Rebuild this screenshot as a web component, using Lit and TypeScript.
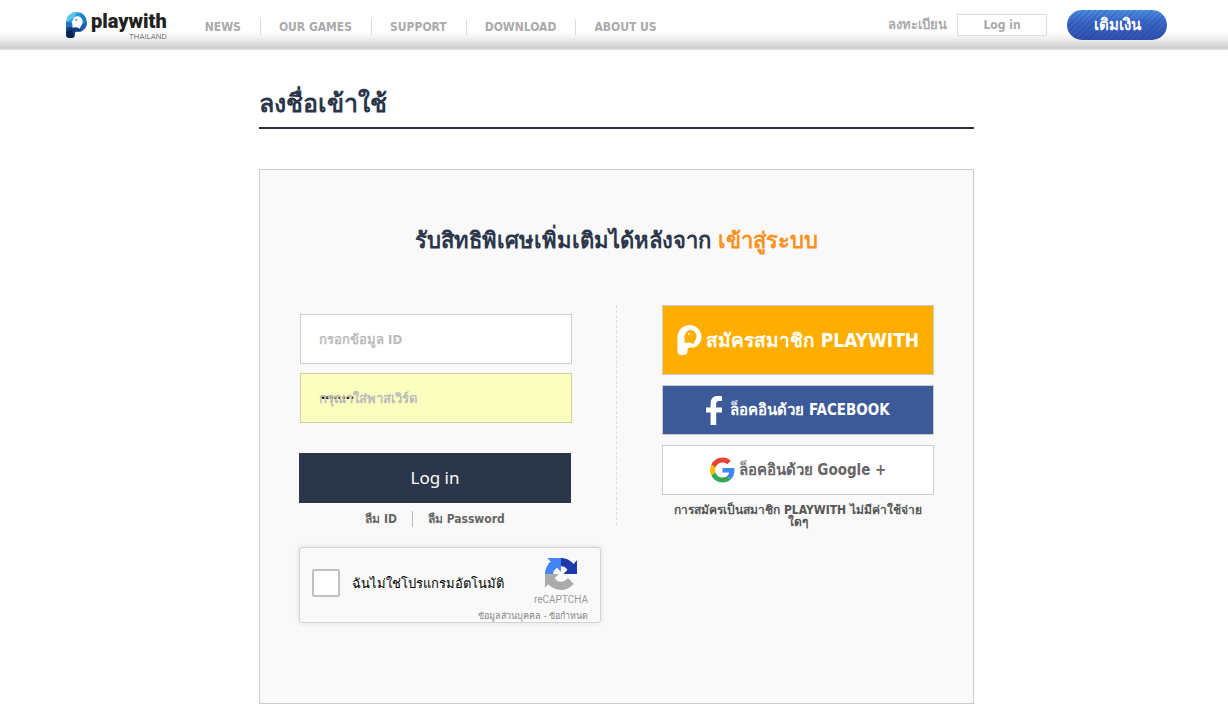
import { LitElement, html, css, svg } from "lit";
import { customElement } from "lit/decorators.js";

const bird = svg`<path
  d="M6.2 11.2c1-.6 1.4-1.2 1.8-2.4C8.8 6.4 10.6 5 13 5c3.6 0 6.2 3 6 6.6-.1 2.8-2.4 4.6-3.2 7.8-1.8-1.8-4.8-2.4-8.2-1.2-.8-2.4.6-4-1.4-7z"/>`;
const body = "M12 0a12 12 0 0 1 12 12c0 5-3 9-7.6 10.4H13c-1.6 0-3 .8-3 2V26a4 4 0 0 1-4 4H4a4 4 0 0 1-4-4V12A12 12 0 0 1 12 0z";

@customElement("site-header")
export class SiteHeader extends LitElement {
  static styles = css`
    :host {
      display: block;
      background: linear-gradient(#fff 64%, #f0f0f0 76%, #cdcdcd 96%, #e2e2e2);
    }
    .bar {
      display: flex;
      align-items: center;
      box-sizing: border-box;
      max-width: 1106px;
      min-height: 50px;
      margin: 0 auto;
      padding-left: 5px;
    }
    a { color: inherit; text-decoration: none; }
    .logo {
      display: flex;
      gap: 4px;
      color: #222;
    }
    .logo svg { width: 21px; height: 26px; margin-top: 2px; }
    .words { display: flex; flex-direction: column; align-items: flex-end; }
    .name { font: 900 20px/22px Roboto, sans-serif; }
    .country { font: 300 8px/9px Roboto, sans-serif; color: #444; }
    nav { display: flex; padding: 3px 0 0 20px; }
    nav a {
      padding: 0 19px 0 18px;
      line-height: 16px;
      color: #aaa;
      border-left: 1px solid #ddd;
    }
    nav a:first-child { border-left: 0; }
    .account {
      display: flex;
      align-items: center;
      margin-left: auto;
      color: #aaa;
    }
    .account a { font-size: 13px; }
    button { font: inherit; color: inherit; cursor: pointer; }
    .login {
      width: 90px;
      height: 22px;
      margin: 0 20px 0 10px;
      padding: 0;
      background: #fff;
      border: 1px solid #ddd;
    }
    .topup {
      width: 100px;
      height: 30px;
      padding: 0;
      border: 0;
      border-radius: 15px;
      color: #fff;
      font-size: 15px;
      background:
        repeating-linear-gradient(135deg, rgba(20, 40, 120, 0.22) 0 1px, transparent 1px 4px),
        linear-gradient(#4a8fdf, #3a66c8 40%, #2f50aa);
    }
  `;
  render() {
    return html`<div class="bar">
      <a class="logo" href="#" aria-label="playwith Thailand">
        <svg viewBox="0 0 24 30">
          <defs><clipPath id="p"><path d=${body} /></clipPath></defs>
          <g clip-path="url(#p)">
            <path fill="#2a9bd8" d="M0 0h24v30H0z" />
            <path fill="#5cc4ee" d="M0 0h13L9 6 0 13z" />
            <path fill="#1b7fc4" d="M16 0h8v13l-6-2z" />
            <path fill="#1c5fa8" d="M24 11v12H12l5-8z" />
            <path fill="#1d74b8" d="M0 11l8 1 1 7-9 3z" />
            <path fill="#123a7c" d="M0 18l9-1 8 2v4l-7 7H0z" />
            <path fill="#0a2352" d="M0 23l6-3 5 10H0z" />
          </g>
          <g fill="#fff">${bird}</g>
          <circle cx="11.5" cy="9" r="1" fill="#1b5fa0" />
        </svg>
        <span class="words"><span class="name">playwith</span><span class="country">THAILAND</span></span>
      </a>
      <nav>
        ${["NEWS", "OUR GAMES", "SUPPORT", "DOWNLOAD", "ABOUT US"].map((t) => html`<a href="#">${t}</a>`)}
      </nav>
      <div class="account">
        <a href="#">ลงทะเบียน</a>
        <button class="login">Log in</button>
        <button class="topup">เติมเงิน</button>
      </div>
    </div>`;
  }
}

@customElement("re-captcha")
export class ReCaptcha extends LitElement {
  static styles = css`
    :host {
      display: flex;
      justify-content: space-between;
      box-sizing: border-box;
      height: 76px;
      padding: 0 12px;
      border: 1px solid #d3d3d3;
      border-radius: 3px;
      box-shadow: 0 0 4px 1px rgba(0, 0, 0, 0.08);
      font-family: "Noto Sans", sans-serif;
      font-weight: 400;
      position: relative;
    }
    label {
      display: flex;
      align-items: center;
      gap: 12px;
      height: 70px;
      font-size: 13px;
      color: #000;
      white-space: nowrap;
    }
    input {
      appearance: none;
      box-sizing: border-box;
      width: 28px;
      height: 28px;
      margin: 0;
      background: #fff;
      border: 2px solid #c1c1c1;
      border-radius: 2px;
    }
    .brand {
      display: flex;
      flex-direction: column;
      align-items: center;
      padding-top: 10px;
      font: 10px/14px Roboto, sans-serif;
      color: #9b9b9b;
    }
    svg { width: 32px; height: 32px; margin-bottom: 3px; }
    .terms {
      position: absolute;
      right: 12px;
      bottom: 0;
      font-size: 9px;
      line-height: 13px;
      color: #888;
      white-space: nowrap;
    }
    a { color: inherit; text-decoration: none; }
  `;
  render() {
    return html`
      <label><input type="checkbox" />ฉันไม่ใช่โปรแกรมอัตโนมัติ</label>
      <div class="brand">
        <svg viewBox="0 0 64 64">
          <path fill="#1c3aa9" d="M64 31.955l-.033-1.37V4.687l-7.16 7.16C50.948 4.674 42.033.093 32.05.093c-10.4 0-19.622 4.96-25.458 12.64l11.736 11.86a15.55 15.55 0 0 1 4.754-5.334c2.05-1.6 4.952-2.906 8.968-2.906.485 0 .86.057 1.135.163 4.976.393 9.288 3.14 11.828 7.124l-8.307 8.307L64 31.953" />
          <path fill="#4285f4" d="M31.862.094l-1.37.033H4.594l7.16 7.16C4.58 13.147 0 22.06 0 32.046c0 10.4 4.96 19.622 12.64 25.458L24.5 45.768a15.55 15.55 0 0 1-5.334-4.754c-1.6-2.05-2.906-4.952-2.906-8.968 0-.485.057-.86.163-1.135.393-4.976 3.14-9.288 7.124-11.828l8.307 8.307L31.86.095" />
          <path fill="#ababab" d="M.001 32.045l.033 1.37v25.898l7.16-7.16c5.86 7.173 14.774 11.754 24.76 11.754 10.4 0 19.622-4.96 25.458-12.64l-11.736-11.86a15.55 15.55 0 0 1-4.754 5.334c-2.05 1.6-4.952 2.906-8.968 2.906-.485 0-.86-.057-1.135-.163-4.976-.393-9.288-3.14-11.828-7.124l8.307-8.307c-10.522.04-22.4.066-27.295-.005" />
        </svg>
        reCAPTCHA
      </div>
      <div class="terms"><a href="#">ข้อมูลส่วนบุคคล</a> - <a href="#">ข้อกำหนด</a></div>
    `;
  }
}

@customElement("app-root")
export class AppRoot extends LitElement {
  static styles = css`
    :host {
      display: block;
      min-height: 100vh;
      background: #fff;
      color: #2b364a;
      font: bold 12px/16px "DejaVu Sans Condensed", "Noto Sans", sans-serif;
    }
    main {
      box-sizing: border-box;
      max-width: 720px;
      margin: 0 auto;
      padding: 34px 0 19px 5px;
    }
    h1 {
      margin: 0 0 40px;
      padding-bottom: 4px;
      border-bottom: 2px solid #2d303c;
      font-size: 25px;
      line-height: 39px;
    }
    .card {
      padding: 55px 39px 80px;
      background: #f9f9f9;
      border: 1px solid #ccc;
    }
    h2 {
      margin: 0 0 48px;
      font-size: 22px;
      line-height: 32px;
      text-align: center;
    }
    h2 em { color: #f7931e; font-style: normal; }
    .columns { display: flex; align-items: flex-start; }
    form { flex: 0 0 302px; padding-top: 9px; }
    .fields { width: 272px; }
    .field { position: relative; margin: 0 -1px 9px 1px; }
    .field input {
      box-sizing: border-box;
      display: block;
      width: 100%;
      height: 50px;
      padding: 0 20px;
      background: #fff;
      border: 1px solid #ccc;
      font: 12px/16px "Noto Sans", sans-serif;
      color: #000;
    }
    .field .filled {
      padding-bottom: 2px;
      background: #faffbd;
      border-color: #cccf9f;
      font-size: 11px;
    }
    .field label {
      position: absolute;
      left: 19px;
      top: 18px;
      color: #bbb;
      font-size: 13px;
      pointer-events: none;
    }
    .submit {
      display: block;
      width: 100%;
      height: 50px;
      margin-top: 30px;
      border: 0;
      background: #2b364a;
      color: #fff;
      font: 17px/24px "Noto Sans", sans-serif;
      cursor: pointer;
    }
    a { color: inherit; text-decoration: none; }
    .forgot {
      display: flex;
      justify-content: center;
      margin: 8px 0 20px;
      line-height: 16px;
      color: #666;
    }
    .forgot a { padding: 0 15px; }
    .forgot a + a { border-left: 1px solid #bbb; }
    .divider {
      align-self: flex-start;
      height: 220px;
      margin: 0 45px 0 15px;
      border-left: 1px dashed #ddd;
    }
    .social { flex: 1; min-width: 0; }
    .social button {
      display: flex;
      align-items: center;
      justify-content: center;
      width: 100%;
      height: 50px;
      margin: 0 0 10px;
      padding: 0;
      border: 1px solid #ccc;
      background: #fff;
      color: #666;
      font: inherit;
      font-size: 15px;
      cursor: pointer;
    }
    .social .join { height: 70px; gap: 4px; background: #ffae00; color: #fff; font-size: 19px; }
    .social .facebook { gap: 8px; background: #3c5a98; color: #fff; }
    .social .google { gap: 4px; margin-bottom: 9px; }
    .join svg { width: 25px; height: 30px; }
    .facebook svg { width: 16px; height: 29px; }
    .google svg { width: 25px; height: 26px; }
    p { margin: 0; padding: 0 5px; font-size: 12px; line-height: 12px; color: #555; text-align: center; }
  `;
  render() {
    return html`
      <site-header></site-header>
      <main>
        <h1>ลงชื่อเข้าใช้</h1>
        <section class="card">
          <h2>รับสิทธิพิเศษเพิ่มเติมได้หลังจาก <em>เข้าสู่ระบบ</em></h2>
          <div class="columns">
            <form @submit=${(e: Event) => e.preventDefault()}>
              <div class="fields">
                <div class="field">
                  <input id="uid" type="text" /><label for="uid">กรอกข้อมูล ID</label>
                </div>
                <div class="field">
                  <input id="pw" class="filled" type="password" value="password" /><label for="pw">กรุณาใส่พาสเวิร์ด</label>
                </div>
                <button class="submit">Log in</button>
                <div class="forgot"><a href="#">ลืม ID</a><a href="#">ลืม Password</a></div>
              </div>
              <re-captcha></re-captcha>
            </form>
            <div class="divider"></div>
            <div class="social">
              <button class="join">
                <svg viewBox="0 0 24 30">
                  <path fill="#fff" d=${body} />
                  <g fill="#ffae00">${bird}</g>
                  <circle cx="11.5" cy="9" r="1" fill="#fff" />
                </svg>
                สมัครสมาชิก PLAYWITH
              </button>
              <button class="facebook">
                <svg viewBox="0 0 16 29">
                  <path fill="#fff" d="M4.6 29V16.5H0v-5h4.6V7.4C4.6 2.6 7.3 0 11.6 0c1.8 0 3.3.1 4.4.3v4.6h-3c-2.2 0-2.8 1.1-2.8 2.8v3.8H16v5h-5.8V29z" />
                </svg>
                ล็อคอินด้วย FACEBOOK
              </button>
              <button class="google">
                <svg viewBox="0 0 48 48">
                  <path fill="#EA4335" d="M24 9.5c3.54 0 6.71 1.22 9.21 3.6l6.85-6.85C35.9 2.38 30.47 0 24 0 14.62 0 6.51 5.38 2.56 13.22l7.98 6.19C12.43 13.72 17.74 9.5 24 9.5z" />
                  <path fill="#4285F4" d="M46.98 24.55c0-1.57-.15-3.09-.38-4.55H24v9.02h12.94c-.58 2.96-2.26 5.48-4.78 7.18l7.73 6c4.51-4.18 7.09-10.36 7.09-17.65z" />
                  <path fill="#FBBC05" d="M10.53 28.59c-.48-1.45-.76-2.99-.76-4.59s.27-3.14.76-4.59l-7.98-6.19C.92 16.46 0 20.12 0 24c0 3.88.92 7.54 2.56 10.78l7.97-6.19z" />
                  <path fill="#34A853" d="M24 48c6.48 0 11.93-2.13 15.89-5.81l-7.73-6c-2.15 1.45-4.92 2.3-8.16 2.3-6.26 0-11.57-4.22-13.47-9.91l-7.98 6.19C6.51 42.62 14.62 48 24 48z" />
                </svg>
                ล็อคอินด้วย Google +
              </button>
              <p>การสมัครเป็นสมาชิก PLAYWITH ไม่มีค่าใช้จ่ายใดๆ</p>
            </div>
          </div>
        </section>
      </main>
    `;
  }
}
